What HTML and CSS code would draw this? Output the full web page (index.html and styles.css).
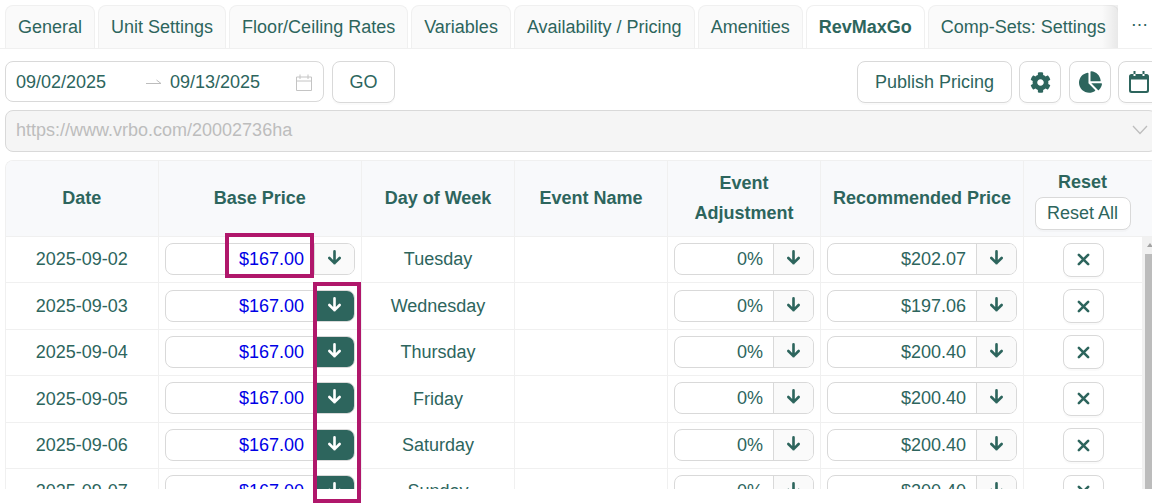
FILE: index.html
```html
<!DOCTYPE html>
<html lang="en">
<head>
<meta charset="utf-8">
<title>RevMaxGo</title>
<link rel="stylesheet" href="styles.css">
</head>
<body>
<svg class="defs" width="0" height="0">
  <defs>
    <symbol id="down" viewBox="0 0 16 16"><path d="M8 1.500V14M2.500 8.500 8 14l5.500-5.500" fill="none" stroke="currentColor" stroke-width="2.800" stroke-linecap="round" stroke-linejoin="round"/></symbol>
    <symbol id="x" viewBox="0 0 14 14"><path d="M2 2l10 10M12 2 2 12" fill="none" stroke="currentColor" stroke-width="2.800" stroke-linecap="round"/></symbol>
  </defs>
</svg>
<div class="page">
  <nav class="tabs">
    <div class="tablist">
      <span class="tab">General</span>
      <span class="tab">Unit Settings</span>
      <span class="tab">Floor/Ceiling Rates</span>
      <span class="tab">Variables</span>
      <span class="tab">Availability / Pricing</span>
      <span class="tab">Amenities</span>
      <span class="tab active">RevMaxGo</span>
      <span class="tab">Comp-Sets: Settings</span>
      <span class="tabfade"></span>
    </div>
    <span class="more">&#8943;</span>
  </nav>

  <div class="toolbar">
    <div class="range">
      <span class="date">09/02/2025</span>
      <svg class="swap" width="16" height="8" viewBox="0 0 16 8"><path d="M0 6.500h15L10.500 3" fill="none" stroke="#bdbdbd" stroke-width="1"/></svg>
      <span class="date">09/13/2025</span>
      <svg class="cal" width="16" height="17" viewBox="0 0 16 17"><path d="M.5 3h15v13.500H.5zM.5 7h15M4 .5V5M12 .5V5" fill="none" stroke="#c4c4c4" stroke-width="1"/></svg>
    </div>
    <button class="btn go">GO</button>
    <span class="spacer"></span>
    <button class="btn publish">Publish Pricing</button>
    <button class="btn icon">
      <svg width="21" height="21" viewBox="0 0 512 512"><path fill="currentColor" d="M487.4 315.7l-42.6-24.6c4.3-23.2 4.3-47 0-70.2l42.6-24.6c4.9-2.8 7.1-8.6 5.5-14-11.1-35.6-30-67.800-54.700-94.600-3.800-4.100-10-5.100-14.800-2.300L380.800 110c-17.900-15.400-38.500-27.300-60.800-35.100V25.800c0-5.600-3.900-10.500-9.400-11.700-36.700-8.200-74.300-7.800-109.200 0-5.500 1.200-9.400 6.100-9.400 11.700V75c-22.200 7.900-42.800 19.800-60.800 35.100L88.700 85.500c-4.900-2.800-11-1.900-14.800 2.300-24.700 26.700-43.600 58.900-54.700 94.600-1.700 5.400.6 11.200 5.500 14L67.300 221c-4.300 23.200-4.300 47 0 70.200l-42.600 24.600c-4.900 2.800-7.100 8.600-5.500 14 11.100 35.600 30 67.800 54.700 94.600 3.800 4.100 10 5.100 14.800 2.300l42.600-24.600c17.900 15.400 38.500 27.300 60.800 35.100v49.200c0 5.600 3.900 10.500 9.400 11.700 36.700 8.200 74.300 7.800 109.200 0 5.500-1.200 9.400-6.100 9.400-11.700v-49.200c22.200-7.900 42.800-19.800 60.800-35.100l42.600 24.600c4.900 2.800 11 1.900 14.800-2.300 24.700-26.700 43.600-58.900 54.700-94.600 1.500-5.500-.7-11.300-5.600-14.100zM256 336c-44.100 0-80-35.900-80-80s35.900-80 80-80 80 35.900 80 80-35.900 80-80 80z"/></svg>
    </button>
    <button class="btn icon">
      <svg width="23" height="22" viewBox="0 0 544 512"><path fill="currentColor" d="M527.79 288H290.5l158.03 158.03c6.04 6.04 15.98 6.53 22.19 .68 38.7-36.46 65.32-85.61 73.13-140.86 1.34-9.46-6.51-17.85-16.06-17.85zm-15.83-64.8C503.72 103.74 408.26 8.28 288.8.04 279.68-.59 272 7.1 272 16.24V240h223.77c9.14 0 16.82-7.68 16.19-16.8zM224 288V50.71c0-9.55-8.39-17.4-17.84-16.06C86.99 51.49-4.1 155.6.14 280.37 4.5 408.51 114.83 513.59 243.03 511.98c50.4-.63 96.97-16.87 135.26-44.03 7.9-5.6 8.42-17.23 1.57-24.08L224 288z"/></svg>
    </button>
    <button class="btn icon last">
      <svg width="20" height="22" viewBox="0 0 20 22"><path fill="currentColor" d="M2.500 3h15A2.500 2.500 0 0 1 20 5.500v14a2.500 2.500 0 0 1-2.500 2.500h-15A2.500 2.500 0 0 1 0 19.500v-14A2.500 2.500 0 0 1 2.500 3zM2 8.500v10.500a1 1 0 0 0 1 1h14a1 1 0 0 0 1-1V8.500zM4.500 0h2v5h-2zM13.500 0h2v5h-2z" fill-rule="evenodd"/></svg>
    </button>
  </div>

  <div class="urlbox">
    <span>https://www.vrbo.com/20002736ha</span>
    <svg width="16" height="10" viewBox="0 0 16 10"><path d="M1 1l7 7.500L15 1" fill="none" stroke="#bdbdbd" stroke-width="1.300"/></svg>
  </div>

  <div class="table">
    <div class="grid head">
      <div class="th">Date</div>
      <div class="th">Base Price</div>
      <div class="th">Day of Week</div>
      <div class="th">Event Name</div>
      <div class="th lines">Event<br>Adjustment</div>
      <div class="th">Recommended Price</div>
      <div class="th stack"><span>Reset</span><button class="btn resetall">Reset All</button></div>
    </div>
    <div class="body">
      <div class="grid row">
        <div class="td plain">2025-09-02</div>
        <div class="td"><div class="group"><span class="field blue">$167.00</span><span class="addon"><svg><use href="#down"/></svg></span></div></div>
        <div class="td plain">Tuesday</div><div class="td"></div>
        <div class="td"><div class="group"><span class="field">0%</span><span class="addon"><svg><use href="#down"/></svg></span></div></div>
        <div class="td"><div class="group"><span class="field">$202.07</span><span class="addon"><svg><use href="#down"/></svg></span></div></div>
        <div class="td"><button class="btn clear"><svg><use href="#x"/></svg></button></div>
      </div>
      <div class="grid row">
        <div class="td plain">2025-09-03</div>
        <div class="td"><div class="group"><span class="field blue">$167.00</span><span class="addon dark"><svg><use href="#down"/></svg></span></div></div>
        <div class="td plain">Wednesday</div><div class="td"></div>
        <div class="td"><div class="group"><span class="field">0%</span><span class="addon"><svg><use href="#down"/></svg></span></div></div>
        <div class="td"><div class="group"><span class="field">$197.06</span><span class="addon"><svg><use href="#down"/></svg></span></div></div>
        <div class="td"><button class="btn clear"><svg><use href="#x"/></svg></button></div>
      </div>
      <div class="grid row">
        <div class="td plain">2025-09-04</div>
        <div class="td"><div class="group"><span class="field blue">$167.00</span><span class="addon dark"><svg><use href="#down"/></svg></span></div></div>
        <div class="td plain">Thursday</div><div class="td"></div>
        <div class="td"><div class="group"><span class="field">0%</span><span class="addon"><svg><use href="#down"/></svg></span></div></div>
        <div class="td"><div class="group"><span class="field">$200.40</span><span class="addon"><svg><use href="#down"/></svg></span></div></div>
        <div class="td"><button class="btn clear"><svg><use href="#x"/></svg></button></div>
      </div>
      <div class="grid row">
        <div class="td plain">2025-09-05</div>
        <div class="td"><div class="group"><span class="field blue">$167.00</span><span class="addon dark"><svg><use href="#down"/></svg></span></div></div>
        <div class="td plain">Friday</div><div class="td"></div>
        <div class="td"><div class="group"><span class="field">0%</span><span class="addon"><svg><use href="#down"/></svg></span></div></div>
        <div class="td"><div class="group"><span class="field">$200.40</span><span class="addon"><svg><use href="#down"/></svg></span></div></div>
        <div class="td"><button class="btn clear"><svg><use href="#x"/></svg></button></div>
      </div>
      <div class="grid row">
        <div class="td plain">2025-09-06</div>
        <div class="td"><div class="group"><span class="field blue">$167.00</span><span class="addon dark"><svg><use href="#down"/></svg></span></div></div>
        <div class="td plain">Saturday</div><div class="td"></div>
        <div class="td"><div class="group"><span class="field">0%</span><span class="addon"><svg><use href="#down"/></svg></span></div></div>
        <div class="td"><div class="group"><span class="field">$200.40</span><span class="addon"><svg><use href="#down"/></svg></span></div></div>
        <div class="td"><button class="btn clear"><svg><use href="#x"/></svg></button></div>
      </div>
      <div class="grid row">
        <div class="td plain">2025-09-07</div>
        <div class="td"><div class="group"><span class="field blue">$167.00</span><span class="addon dark"><svg><use href="#down"/></svg></span></div></div>
        <div class="td plain">Sunday</div><div class="td"></div>
        <div class="td"><div class="group"><span class="field">0%</span><span class="addon"><svg><use href="#down"/></svg></span></div></div>
        <div class="td"><div class="group"><span class="field">$200.40</span><span class="addon"><svg><use href="#down"/></svg></span></div></div>
        <div class="td"><button class="btn clear"><svg><use href="#x"/></svg></button></div>
      </div>
      <div class="scrollbar"><i class="up"></i><i class="thumb"></i></div>
    </div>
  </div>

  <div class="mark mark-price"></div>
  <div class="mark mark-buttons"></div>
</div>
</body>
</html>
```

FILE: styles.css
```css
* { box-sizing: border-box; }
html, body { margin: 0; background: #fff; }
body { width: 1152px; height: 504px; overflow: hidden; }
.defs { position: absolute; }
.page {
  position: relative;
  width: 1152px;
  height: 504px;
  overflow: hidden;
  padding: 5px 0 0 5px;
  font-family: "Liberation Sans", Arial, sans-serif;
  font-size: 18px;
  color: #2d655d;
}

/* Tabs */
.tabs {
  display: flex;
  height: 44px;
  margin-left: -5px;
  padding-left: 5px;
  border-bottom: 1px solid #f0f0f0;
}
.tablist {
  position: relative;
  display: flex;
  gap: 3px;
  width: 1113px;
  overflow: hidden;
}
.tab {
  flex: none;
  height: 43px;
  padding: 0 12px;
  line-height: 43px;
  white-space: nowrap;
  background: #fafafa;
  border: 1px solid #f0f0f0;
  border-bottom: 0;
  border-radius: 8px 8px 0 0;
}
.tab.active {
  height: 44px;
  background: #fff;
  font-weight: 700;
}
.tabfade {
  position: absolute;
  top: 0;
  right: 0;
  width: 16px;
  height: 43px;
  background: linear-gradient(to right, rgba(0,0,0,0), rgba(0,0,0,.07));
}
.more {
  margin-left: 13px;
  font-size: 17px;
  line-height: 40px;
}

/* Toolbar */
.toolbar {
  display: flex;
  align-items: flex-start;
  gap: 8px;
  margin-top: 12px;
  width: 1155px;
}
.spacer { flex: 1; }
.btn {
  font: inherit;
  color: inherit;
  background: #fff;
  border: 1px solid #d9d9d9;
  border-radius: 8px;
  box-shadow: 0 2px 0 rgba(0,0,0,.02);
  padding: 0;
}
.range {
  display: flex;
  align-items: center;
  width: 319px;
  height: 41px;
  padding: 1px 11px 0 10px;
  border: 1px solid #d9d9d9;
  border-radius: 8px;
}
.date { flex: none; width: 91px; }
.swap { margin: -2px 8px 0 39px; flex: none; }
.cal { margin-left: auto; }
.go { width: 63px; height: 42px; }
.publish { width: 155px; height: 42px; margin-right: -1px; }
.icon {
  display: flex;
  align-items: center;
  justify-content: center;
  width: 42px;
  height: 42px;
  flex: none;
}
.icon.last { margin-left: -1px; }

/* URL */
.urlbox {
  display: flex;
  align-items: center;
  justify-content: space-between;
  height: 42px;
  width: 1152px;
  margin-top: 7px;
  padding: 0 8px 2px 10px;
  background: #f5f5f5;
  border: 1px solid #d9d9d9;
  border-radius: 8px;
  color: #bdbdbd;
}

/* Table */
.table {
  margin-top: 8px;
  width: 1152px;
  height: 329px;
  overflow: hidden;
  border-top: 1px solid #f0f0f0;
  border-left: 1px solid #f0f0f0;
  border-radius: 8px 0 0 0;
}
.grid {
  display: grid;
  grid-template-columns: 152.500px 203.500px 153px 153px 153px 203px 1fr;
}
.head {
  height: 76px;
  background: #f8f9fb;
  border-bottom: 1px solid #f0f0f0;
  font-weight: 700;
}
.th {
  display: flex;
  align-items: center;
  justify-content: center;
  text-align: center;
  border-right: 1px solid #f0f0f0;
  line-height: 30px;
  padding-bottom: 2px;
}
.th:last-child { border-right: 0; padding-right: 16px; }
.stack { flex-direction: column; line-height: 20px; padding-top: 6px; }
.resetall {
  width: 96px;
  height: 33px;
  margin-top: 5px;
  font-weight: 400;
}
.body { position: relative; height: 252px; overflow: hidden; }
.row {
  height: 46.4px;
  border-bottom: 1px solid #f0f0f0;
}
.td {
  display: flex;
  align-items: center;
  justify-content: center;
  border-right: 1px solid #f0f0f0;
  padding: 0 6px;
  min-width: 0;
  padding-bottom: 1px;
}
.td.plain { padding-bottom: 0; padding-top: 0.5px; }
.td:last-child { border-right: 0; padding-right: 20px; padding-top: 1px; }
.group {
  display: flex;
  width: 100%;
  height: 32px;
  border: 1px solid #d9d9d9;
  border-radius: 8px;
  overflow: hidden;
  background: #fff;
}
.field {
  flex: 1;
  min-width: 0;
  text-align: right;
  padding-right: 10px;
  line-height: 30px;
}
.blue { color: #0000e6; }
.addon {
  display: flex;
  align-items: center;
  justify-content: center;
  flex: none;
  width: 40px;
  background: #fafafa;
  border-left: 1px solid #d9d9d9;
}
.addon svg { width: 15px; height: 15px; margin-top: -3px; margin-left: -1px; }
.addon.dark {
  background: #2d655d;
  border-left: 0;
  color: #fff;
  margin: -1px -1px -1px 0;
  width: 41px;
  border-radius: 0 8px 8px 0;
}
.clear {
  display: flex;
  align-items: center;
  justify-content: center;
  width: 41px;
  height: 34px;
}
.clear svg { width: 13px; height: 13px; }
.scrollbar {
  position: absolute;
  top: 0;
  right: 5px;
  width: 10px;
  height: 100%;
  background: #f1f1f1;
}
.up {
  display: block;
  margin: 6px 0 0 5px;
  width: 0;
  height: 0;
  border: 3px solid transparent;
  border-top: 0;
  border-bottom: 4px solid #a3a3a3;
}
.thumb {
  display: block;
  margin: 7px 0 0 3px;
  height: 240px;
  background: #bcbcbc;
}

/* Annotations */
.mark {
  position: absolute;
  border: 4px solid #b0176b;
}
.mark-price { left: 225px; top: 233px; width: 89px; height: 45px; }
.mark-buttons { left: 313px; top: 282px; width: 48px; height: 221px; }
```
